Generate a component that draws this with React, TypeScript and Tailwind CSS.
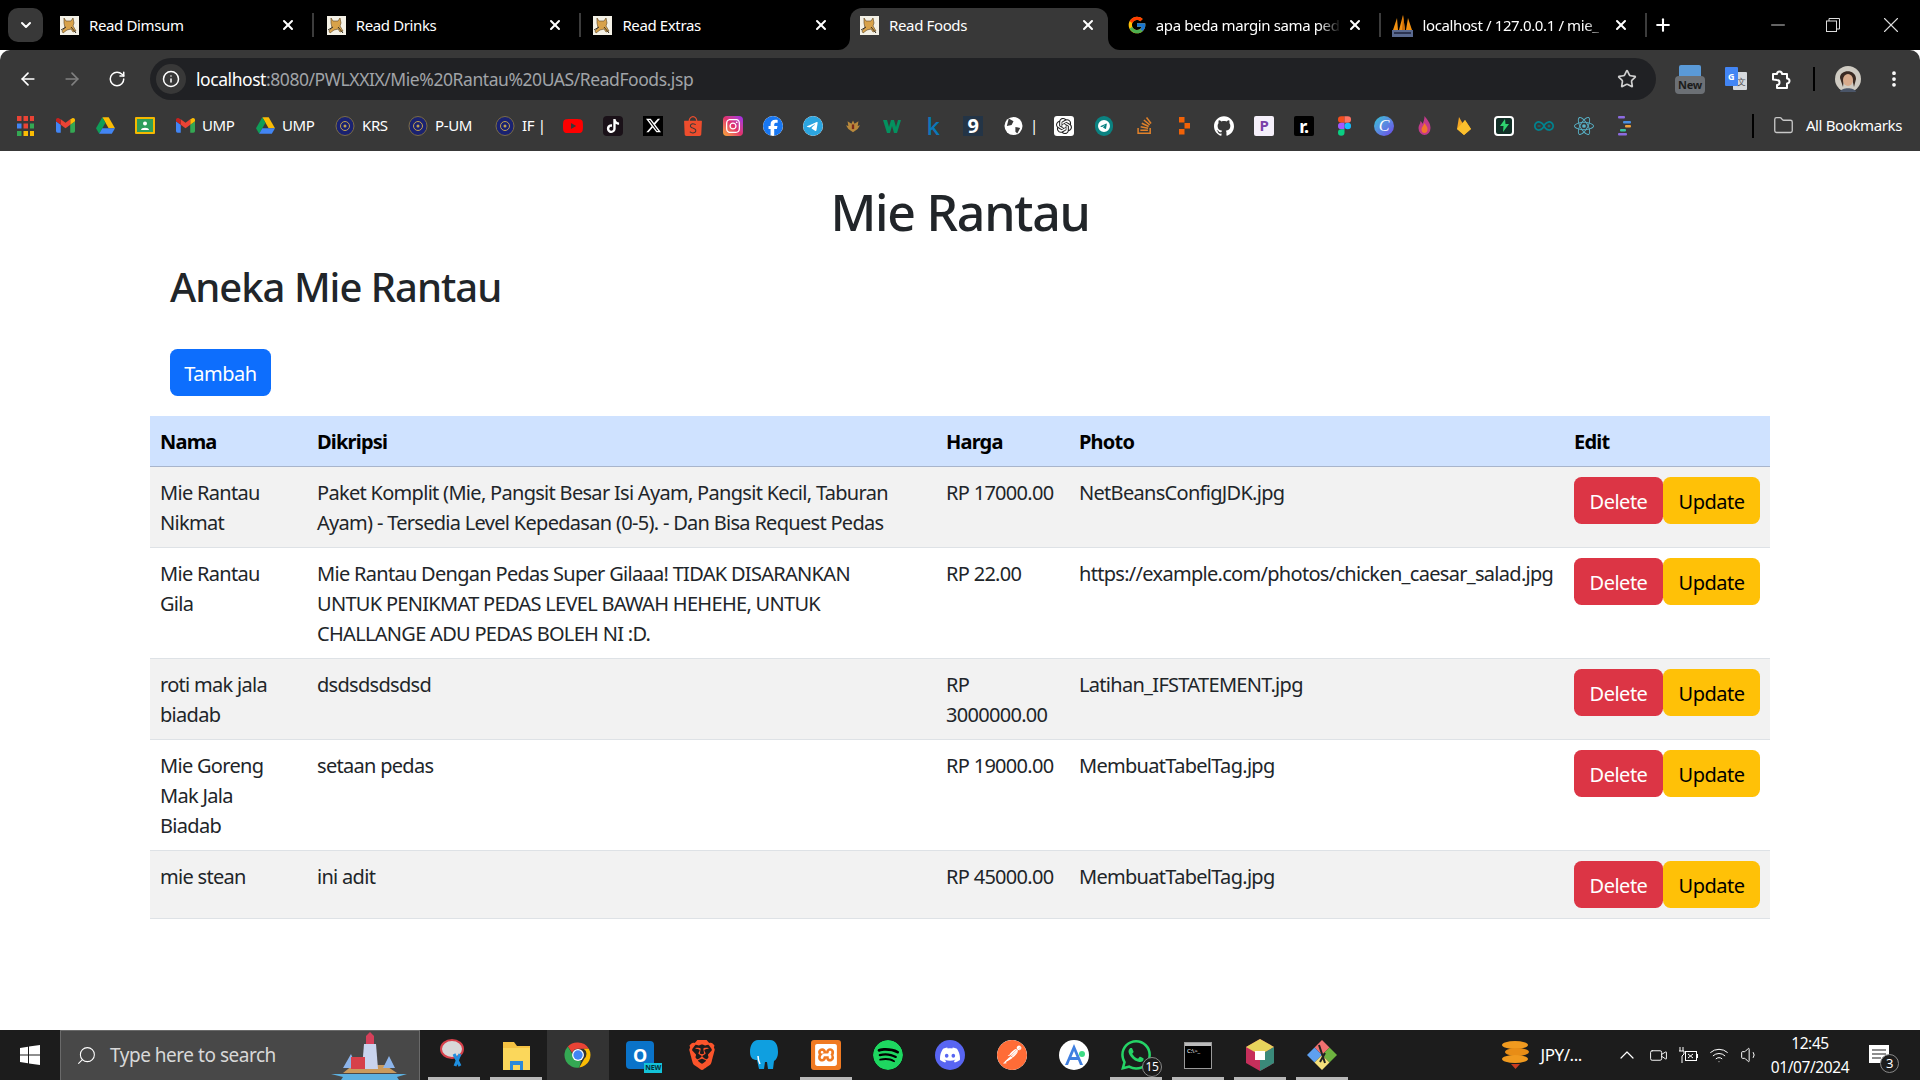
import React from "react";
import { SiYoutube, SiTiktok, SiX, SiShopee, SiInstagram, SiFacebook, SiTelegram, SiOpenai, SiStackoverflow, SiGithub, SiArduino, SiReact, SiSpotify, SiDiscord, SiPostman, SiBrave, SiXampp, SiWhatsapp } from "react-icons/si";
import { FcGoogle } from "react-icons/fc";
import { ChevronDown, X, Plus, ArrowLeft, ArrowRight, RotateCw, Info, Star, EllipsisVertical, Folder, Minus, Search, ChevronUp, Wifi, Volume1, Video } from "lucide-react";

const Tomcat = () => (
  <svg width="19" height="19" viewBox="0 0 19 19" className="shrink-0">
    <rect width="19" height="19" fill="#f4f1e6" />
    <path d="M4 2l2 3 5 0 2-3 1 5-1 3 3 5-3 1-2-3-4 1-4 3-1-2 3-3-1-5z" fill="#d8a24a" stroke="#5a4526" strokeWidth=".6" />
    <path d="M1 14l5-3M11 11l5 6" stroke="#3a3222" strokeWidth="1" />
  </svg>
);
const Pma = () => (
  <svg width="21" height="24" viewBox="0 0 21 24" className="-ml-[1px] -mr-[1px] shrink-0">
    <path d="M1 17L5 5l1 12zM7 17l4-15 2 15zM14 17l2-12 4 12z" fill="#f29111" />
    <path d="M6 17l-1-12 1 12zM13 17L11 2l-1 15z" fill="#c96a06" />
    <rect x="0" y="17" width="21" height="7" fill="#5a6a90" />
    <rect x="2" y="19" width="17" height="2" fill="#2b3350" />
  </svg>
);
const Gmail = () => (
  <svg width="19" height="15" viewBox="0 0 24 18">
    <path d="M2 18h4V8L0 3.500V16a2 2 0 0 0 2 2z" fill="#4285f4" />
    <path d="M18 18h4a2 2 0 0 0 2-2V3.500L18 8z" fill="#34a853" />
    <path d="M18 1v7l6-4.500V2c0-2-2.300-3-3.800-1.800z" fill="#fbbc04" />
    <path d="M6 8V1l6 4.500L18 1v7l-6 4.500z" fill="#ea4335" />
    <path d="M0 2v1.500L6 8V1L3.800.200C2.300-1 0 0 0 2z" fill="#c5221f" />
  </svg>
);
const Drive = () => (
  <svg width="19" height="17" viewBox="0 0 24 21">
    <path d="M8 0h8l8 14h-8z" fill="#fbbc04" />
    <path d="M8 0L0 14l4 7 8-14z" fill="#0f9d58" />
    <path d="M4 21h16l4-7H8z" fill="#4285f4" />
  </svg>
);
const Classroom = () => (
  <svg width="20" height="17" viewBox="0 0 20 17">
    <rect width="20" height="17" rx="1" fill="#f5b800" />
    <rect x="2" y="2" width="16" height="13" fill="#2e9e5b" />
    <circle cx="10" cy="6.500" r="2" fill="#fff" />
    <path d="M6 13c0-3 8-3 8 0z" fill="#fff" />
  </svg>
);
const Ump = () => (
  <svg width="20" height="20" viewBox="0 0 20 20">
    <ellipse cx="10" cy="10" rx="9" ry="9.500" fill="#1a2270" stroke="#7b6c45" />
    <circle cx="10" cy="10" r="4.500" fill="none" stroke="#c0a052" strokeWidth="1" />
    <circle cx="10" cy="10" r="1.500" fill="#c0a052" />
  </svg>
);
const Apps = () => (
  <svg width="17" height="20" viewBox="0 0 17 20">
    {[["#ea4335", "#ea4335", "#ea4335"], ["#4285f4", "#ea4335", "#34a853"], ["#34a853", "#fbbc04", "#fbbc04"]].flatMap((r, j) =>
      r.map((c, i) => <rect key={`${i}${j}`} x={i * 6.500} y={j * 7.500} width="4.500" height="5" fill={c} />)
    )}
  </svg>
);
const Figma = () => (
  <svg width="13" height="20" viewBox="0 0 12 18">
    <path d="M3 0h3v6H3a3 3 0 0 1 0-6z" fill="#f24e1e" />
    <path d="M6 0h3a3 3 0 0 1 0 6H6z" fill="#ff7262" />
    <path d="M3 6h3v6H3a3 3 0 0 1 0-6z" fill="#a259ff" />
    <circle cx="9" cy="9" r="3" fill="#1abcfe" />
    <path d="M3 12h3v3a3 3 0 1 1-3-3z" fill="#0acf83" />
  </svg>
);
const Chrome = () => (
  <svg width="30" height="30" viewBox="0 0 48 48">
    <path d="M24 4a20 20 0 0 1 17.300 10H24a10 10 0 0 0-9.400 6.500L7.800 10.500A20 20 0 0 1 24 4z" fill="#ea4335" />
    <path d="M41.300 14A20 20 0 0 1 26 43.900l8-13.900A10 10 0 0 0 33 14z" fill="#fbbc04" />
    <path d="M26 43.900A20 20 0 0 1 7.800 10.500L16 24.500A10 10 0 0 0 29 32.600z" fill="#34a853" />
    <circle cx="24" cy="24" r="9.500" fill="#fff" />
    <circle cx="24" cy="24" r="7.500" fill="#4285f4" />
  </svg>
);
const Flare = ({ side }: { side: "l" | "r" }) => (
  <svg width="12" height="12" viewBox="0 0 12 12" className={`absolute bottom-0 ${side === "l" ? "-left-[12px]" : "-right-[12px]"}`}>
    <path d={side === "l" ? "M12 0v12H0A12 12 0 0 0 12 0z" : "M0 0v12h12A12 12 0 0 1 0 0z"} fill="#383838" />
  </svg>
);
const Bm = ({ w = 40, icon, label }: { w?: number; icon: React.ReactNode; label?: string }) => (
  <div className="flex h-full shrink-0 items-center" style={{ width: w }}>
    <div className="flex w-10 shrink-0 items-center justify-center">{icon}</div>
    {label && <span className="-ml-[3px] whitespace-nowrap text-[15px] text-white">{label}</span>}
  </div>
);
const TabItem = ({ title, icon, active, sep = true, fade }: { title: string; icon: React.ReactNode; active?: boolean; sep?: boolean; fade?: boolean }) => (
  <div className="flex h-full w-[266.700px] shrink-0 items-end">
    <div className={`relative flex h-[42px] w-[258px] items-center pb-[8px] pl-[10px] ${active ? "rounded-t-[12px] bg-[#383838]" : ""}`}>
      {active && <Flare side="l" />}
      {active && <Flare side="r" />}
      {icon}
      <span className={`ml-[10px] w-[185px] overflow-hidden whitespace-nowrap text-[15px] text-white ${fade ? "[mask-image:linear-gradient(to_right,black_88%,transparent)]" : ""}`}>{title}</span>
      <X size={16} strokeWidth={3} className="ml-[6px] shrink-0 text-white" />
    </div>
    {sep && <div className="mb-[13px] ml-[4px] h-[24px] w-[2px] shrink-0 bg-[#3c3c3c]" />}
  </div>
);
const TaskIcon = ({ children, open, active }: { children: React.ReactNode; open?: boolean; active?: boolean }) => (
  <div className={`relative flex h-full w-[62px] shrink-0 items-center justify-center ${active ? "bg-[#333333]" : ""}`}>
    {children}
    {open && <div className="absolute bottom-0 left-[5px] h-[3px] w-[52px] bg-[#b8b8b8]" />}
  </div>
);
const rows: { n: string; d: React.ReactNode; h: string; p: string }[] = [
  { n: "Mie Rantau Nikmat", d: "Paket Komplit (Mie, Pangsit Besar Isi Ayam, Pangsit Kecil, Taburan Ayam) - Tersedia Level Kepedasan (0-5). - Dan Bisa Request Pedas", h: "RP 17000.00", p: "NetBeansConfigJDK.jpg" },
  { n: "Mie Rantau Gila", d: <>Mie Rantau Dengan Pedas Super Gilaaa! TIDAK DISARANKAN<br />UNTUK PENIKMAT PEDAS LEVEL BAWAH HEHEHE, UNTUK<br />CHALLANGE ADU PEDAS BOLEH NI :D.</>, h: "RP 22.00", p: "https://example.com/photos/chicken_caesar_salad.jpg" },
  { n: "roti mak jala biadab", d: "dsdsdsdsdsd", h: "RP 3000000.00", p: "Latihan_IFSTATEMENT.jpg" },
  { n: "Mie Goreng Mak Jala Biadab", d: "setaan pedas", h: "RP 19000.00", p: "MembuatTabelTag.jpg" },
  { n: "mie stean", d: "ini adit", h: "RP 45000.00", p: "MembuatTabelTag.jpg" },
];
const th = "border-b border-[#a8b5cc] bg-[#cfe2ff] pb-[9px] pl-[10px] pr-[10px] pt-[11px] text-left align-top font-bold text-black";

export default function App() {
  return (
    <div className="flex h-screen w-[1920px] flex-col overflow-hidden bg-white font-['Noto_Sans',sans-serif] [&_*]:tracking-[-0.025em]">
      <div className="flex h-[50px] shrink-0 items-end bg-black">
        <div className="flex w-[50px] shrink-0 items-start self-start pl-[8px] pt-[8px]">
          <div className="flex h-[34px] w-[35px] items-center justify-center rounded-[10px] bg-[#383838]"><ChevronDown size={16} strokeWidth={3} className="text-white" /></div>
        </div>
        <TabItem title="Read Dimsum" icon={<Tomcat />} />
        <TabItem title="Read Drinks" icon={<Tomcat />} />
        <TabItem title="Read Extras" icon={<Tomcat />} sep={false} />
        <TabItem title="Read Foods" icon={<Tomcat />} active sep={false} />
        <TabItem title="apa beda margin sama ped" fade icon={<FcGoogle size={20} className="-mr-[1px] shrink-0" />} />
        <TabItem title="localhost / 127.0.0.1 / mie_" fade icon={<Pma />} />
        <div className="flex h-full items-center pl-[3px]"><Plus size={20} strokeWidth={2.500} className="text-white" /></div>
        <div className="flex-1" />
        <div className="flex h-full items-center pr-[16px] text-[#dcdcdc]">
          <Minus size={22} strokeWidth={1} />
          <svg width="14" height="14" viewBox="0 0 14 14" fill="none" stroke="#dcdcdc" className="ml-[37px]"><rect x=".5" y="3" width="10" height="10.500" /><path d="M3 3V.5h10.500V11H10.500" /></svg>
          <X size={26} strokeWidth={1} className="ml-[38px]" />
        </div>
      </div>
      <div className="flex h-[50px] shrink-0 items-end rounded-t-[10px] bg-[#383838]">
        <div className="flex h-[42px] w-[150px] items-center pl-[18px] text-white">
          <ArrowLeft size={20} strokeWidth={2} />
          <ArrowRight size={20} strokeWidth={2} className="ml-[24px] text-[#808080]" />
          <RotateCw size={18} strokeWidth={2} className="ml-[26px]" />
        </div>
        <div className="flex h-[42px] w-[1506px] items-center rounded-full bg-[#202124] pl-[6px] pr-[19px]">
          <div className="flex h-[30px] w-[30px] items-center justify-center rounded-full bg-[#383838]"><Info size={18} className="text-white" /></div>
          <div className="ml-[10px] flex-1 whitespace-nowrap text-[17.500px] text-[#a0a4a8]"><span className="text-white">localhost</span>:8080/PWLXXIX/Mie%20Rantau%20UAS/ReadFoods.jsp</div>
          <Star size={20} strokeWidth={2} className="text-[#d0d0d0]" />
        </div>
        <div className="flex h-[42px] flex-1 items-center pl-[16px] text-white">
          <div className="flex w-[36px] flex-col items-center">
            <div className="h-[12px] w-[22px] rounded-t-[2px] bg-[#5a9ad8]" />
            <div className="-mt-[1px] flex h-[18px] w-[30px] items-center justify-center rounded-[4px] bg-[#6c7075] text-[11px] font-bold leading-none text-[#1c1c1c]">New</div>
          </div>
          <svg width="22" height="24" viewBox="0 0 22 24" className="ml-[17px]"><rect x="8" y="5" width="14" height="18" rx="1" fill="#d5d8dc" /><text x="12" y="18" fontSize="9" fill="#555">文</text><rect width="13" height="19" rx="1" fill="#4285f4" /><text x="3" y="13" fontSize="9" fontWeight="700" fill="#fff">G</text></svg>
          <svg width="22" height="22" viewBox="0 0 22 22" fill="none" stroke="#fff" strokeWidth="2" strokeLinejoin="round" className="ml-[23px]"><path d="M3 6h4a2.500 2.500 0 0 1 5 0h5v4.500a2.500 2.500 0 0 1 0 5V20H7v-3a2.500 2.500 0 0 0 0-5l-4-.5z" /></svg>
          <div className="ml-[21px] h-[24px] w-[2px] bg-black" />
          <svg width="26" height="26" viewBox="0 0 26 26" className="ml-[20px]"><circle cx="13" cy="13" r="13" fill="#cfcbc2" /><path d="M5 12C5 3 21 3 21 13l-2 8-2-9-8-1-1 10z" fill="#3a2a22" /><ellipse cx="13" cy="14" rx="5" ry="6" fill="#d8ab8c" /><path d="M5 26c1-5 15-5 16 0z" fill="#4a5568" /></svg>
          <EllipsisVertical size={20} strokeWidth={2.500} className="ml-[23px]" />
        </div>
      </div>
      <div className="flex h-[51px] shrink-0 items-center bg-[#383838] pl-[5px]">
        <Bm icon={<Apps />} />
        <Bm icon={<Gmail />} />
        <Bm icon={<Drive />} />
        <Bm icon={<Classroom />} />
        <Bm w={80} icon={<Gmail />} label="UMP" />
        <Bm w={80} icon={<Drive />} label="UMP" />
        <Bm w={73} icon={<Ump />} label="KRS" />
        <Bm w={87} icon={<Ump />} label="P-UM" />
        <Bm w={68} icon={<Ump />} label="IF |" />
        <Bm icon={<SiYoutube size={20} className="text-[#ff0000]" />} />
        <Bm icon={<div className="flex h-[20px] w-[20px] items-center justify-center rounded-[4px] bg-[#1a1118]"><SiTiktok size={14} className="text-white" /></div>} />
        <Bm icon={<div className="flex h-[20px] w-[20px] items-center justify-center bg-black"><SiX size={15} className="text-white" /></div>} />
        <Bm icon={<SiShopee size={20} className="text-[#ee4d2d]" />} />
        <Bm icon={<div className="flex h-[20px] w-[20px] items-center justify-center rounded-[4px] bg-gradient-to-tr from-[#f9a825] via-[#e1306c] to-[#a020f0]"><SiInstagram size={14} className="text-white" /></div>} />
        <Bm icon={<SiFacebook size={20} className="rounded-full bg-white text-[#1877f2]" />} />
        <Bm icon={<SiTelegram size={20} className="rounded-full bg-white text-[#2ca5e0]" />} />
        <Bm icon={<svg width="14" height="18" viewBox="0 0 18 20"><path d="M9 3l2 4 5-3-1 6 3-1-3 5-6 4-6-4-3-5 3 1-1-6 5 3z" fill="#b8893c" /><path d="M9 8v6" stroke="#7a2a1a" strokeWidth="3" /></svg>} />
        <Bm icon={<svg width="20" height="16" viewBox="0 0 20 16"><path d="M0 2h4l2 7 2-7h3l2 7 2-7h3l-4 13h-3L9 8l-2 7H4z" fill="#04915f" /></svg>} />
        <Bm icon={<span className="text-[24px] font-medium leading-none text-[#0a79b8]">k</span>} />
        <Bm icon={<div className="flex h-[20px] w-[20px] items-center justify-center bg-[#233446] text-[20px] font-bold leading-none text-white">9</div>} />
        <Bm w={51} icon={<svg width="19" height="20" viewBox="0 0 20 20"><circle cx="10" cy="10" r="9.500" fill="#fff" /><path d="M5 2l5 3-2 4-5 1zM12 11l5 1-3 6-2-2z" fill="#383838" /></svg>} label="|" />
        <Bm icon={<div className="flex h-[20px] w-[20px] items-center justify-center rounded-[3px] bg-white"><SiOpenai size={16} className="text-[#222]" /></div>} />
        <Bm icon={<div className="flex h-[20px] w-[18px] items-center justify-center rounded-full bg-[#0b8281]"><SiTelegram size={12} className="text-white" /></div>} />
        <Bm icon={<SiStackoverflow size={17} className="text-[#e0812a]" />} />
        <Bm icon={<svg width="13" height="18" viewBox="0 0 13 18" fill="#f26207"><rect x="1" width="5.500" height="5.500" /><rect x="6.500" y="6" width="5.500" height="5.500" /><rect x="1" y="12" width="5.500" height="5.500" /></svg>} />
        <Bm icon={<SiGithub size={20} className="text-white" />} />
        <Bm icon={<div className="flex h-[20px] w-[20px] items-center justify-center rounded-[2px] bg-[#f5f0fa] text-[15px] font-bold text-[#7b3fa8]">P</div>} />
        <Bm icon={<div className="flex h-[20px] w-[20px] items-end justify-center rounded-[2px] bg-black pb-[2px] text-[18px] font-bold leading-[15px] text-white">r.</div>} />
        <Bm icon={<Figma />} />
        <Bm icon={<div className="flex h-[20px] w-[20px] items-center justify-center rounded-full bg-gradient-to-br from-[#22c4d4] to-[#6a3de8] font-['Liberation_Serif',serif] text-[16px] italic leading-none text-white">C</div>} />
        <Bm icon={<svg width="13" height="20" viewBox="0 0 13 20"><path d="M6.500 0c3 4 6 7 6 12a6 7 0 0 1-12 0c0-3 2-4 2-7 1 1 2 2 2 3 1-2 2-5 2-8z" fill="#c23a8a" /><path d="M6.500 7c2 3 3 4 3 6a3 4 0 0 1-6 0c0-2 2-3 3-6z" fill="#f2762e" /></svg>} />
        <Bm icon={<svg width="16" height="20" viewBox="0 0 16 20"><path d="M1 13L3 1l4 7 2-4 6 9-7 6z" fill="#f5a623" /><path d="M1 13l7 6 7-6-6-9z" fill="#fbc02d" /></svg>} />
        <Bm icon={<div className="flex h-[20px] w-[20px] items-center justify-center rounded-[4px] border-[2px] border-white bg-[#123028]"><svg width="9" height="13" viewBox="0 0 9 13" fill="#2fd46f"><path d="M5 0L0 7h3.500L3 13l6-8H5.500z" /></svg></div>} />
        <Bm icon={<SiArduino size={20} className="text-[#00838f]" />} />
        <Bm icon={<SiReact size={20} className="text-[#58b3c9]" />} />
        <Bm icon={<svg width="15" height="20" viewBox="0 0 15 20"><rect x="1" width="7" height="2.500" rx="1" fill="#8c6be0" /><rect x="6" y="5" width="8" height="2.500" rx="1" fill="#4a90e2" /><rect x="8" y="9" width="6" height="2.500" rx="1" fill="#f2a33a" /><rect x="3" y="13" width="6" height="2.500" rx="1" fill="#3ac5a0" /><rect x="1" y="17" width="9" height="2.500" rx="1" fill="#8c6be0" /></svg>} />
        <div className="flex-1" />
        <div className="mr-[19px] h-[24px] w-[2px] bg-black" />
        <Folder size={21} strokeWidth={1.500} className="text-[#c8c8c8]" />
        <span className="ml-[12px] mr-[18px] whitespace-nowrap text-[15px] text-white">All Bookmarks</span>
      </div>
      <main className="flex-1 bg-white pt-[31px] text-[#212529]">
        <h1 className="text-center text-[50px] font-medium leading-[60px]">Mie Rantau</h1>
        <div className="px-[150px]">
          <h2 className="ml-[20px] mt-[21px] text-[40px] font-medium leading-[48px]">Aneka Mie Rantau</h2>
          <button className="ml-[20px] mt-[38px] block h-[47px] w-[101px] rounded-[7.500px] bg-[#0d6efd] pt-[2px] text-[20px] text-white">Tambah</button>
          <table className="mt-[20px] w-[1620px] table-fixed border-collapse text-[20px] leading-[30px] [&_td]:tracking-[-0.035em] [&_th]:tracking-[-0.04em]">
            <colgroup>
              <col className="w-[157px]" /><col className="w-[629px]" /><col className="w-[133px]" /><col className="w-[495px]" /><col className="w-[206px]" />
            </colgroup>
            <thead>
              <tr>
                <th className={th}>Nama</th><th className={th}>Dikripsi</th><th className={th}>Harga</th><th className={th}>Photo</th><th className={th}>Edit</th>
              </tr>
            </thead>
            <tbody>
              {rows.map((r, i) => {
                const td = `border-b border-[#dee2e6] px-[10px] pb-[9px] pt-[11px] align-top ${i % 2 === 0 ? "bg-[#f2f2f2]" : "bg-white"}`;
                const tdBtn = `border-b border-[#dee2e6] p-[10px] align-top ${i % 2 === 0 ? "bg-[#f2f2f2]" : "bg-white"}`;
                return (
                  <tr key={i}>
                    <td className={td}>{r.n}</td>
                    <td className={td}>{r.d}</td>
                    <td className={td}>{r.h}</td>
                    <td className={td}>{r.p}</td>
                    <td className={tdBtn}>
                      <div className="flex">
                        <button className="h-[47px] w-[89px] rounded-[7.500px] bg-[#dc3545] pt-[2px] text-[20px] text-white">Delete</button>
                        <button className="h-[47px] w-[97px] rounded-[7.500px] bg-[#ffc107] pt-[2px] text-[20px] text-black">Update</button>
                      </div>
                    </td>
                  </tr>
                );
              })}
            </tbody>
          </table>
        </div>
      </main>
      <div className="flex h-[50px] shrink-0 items-center bg-[#1c1c1c]">
        <div className="flex w-[60px] justify-center">
          <svg width="20" height="20" viewBox="0 0 20 20" fill="#fff"><path d="M0 3l8-1.200V9.500H0zM9 1.600L20 0v9.500H9zM0 10.500h8v7.700L0 17zM9 10.500h11V20L9 18.400z" /></svg>
        </div>
        <div className="flex h-full w-[360px] items-center border border-b-0 border-[#6a6a6a] bg-[#484848] pl-[15px] pr-[12px]">
          <Search size={21} strokeWidth={1.200} className="-scale-x-100 text-white" />
          <span className="ml-[13px] text-[19px] text-[#d8d8d8]">Type here to search</span>
          <div className="flex-1" />
          <svg width="76" height="48" viewBox="0 0 76 48" className="self-end">
            <path d="M0 42h76l-10 3 2 3H10l2-3z" fill="#5cb0e0" />
            <path d="M12 41l10-8h32l12 8z" fill="#c99a5c" />
            <path d="M12 36l8-14 6 14zM52 36l6-12 6 12z" fill="#8db4ea" />
            <path d="M33 12h12l2 25H31z" fill="#c9d4ee" />
            <rect x="35" y="4" width="8" height="8" fill="#d6405a" />
            <path d="M39 0l4 4h-8z" fill="#d6405a" />
            <rect x="20" y="25" width="14" height="12" fill="#d6404a" />
          </svg>
        </div>
        <div className="w-[3px]" />
        <TaskIcon open><svg width="28" height="34" viewBox="0 0 28 34"><ellipse cx="12" cy="11" rx="11" ry="9" fill="#d8d8d8" stroke="#d6404a" strokeWidth="2" /><path d="M14 16l6 12M20 16l-5 12" stroke="#1f8fe0" strokeWidth="3" /></svg></TaskIcon>
        <TaskIcon open><svg width="27" height="30" viewBox="0 0 27 30"><path d="M0 2h11l3 4h13v24H0z" fill="#f5c242" /><path d="M0 8h27v22H0z" fill="#fbd75b" /><path d="M7 30v-9h13v9h-3v-5h-7v5z" fill="#2c89d9" /></svg></TaskIcon>
        <TaskIcon active><Chrome /></TaskIcon>
        <TaskIcon><div className="relative"><div className="flex h-[28px] w-[28px] items-center justify-center rounded-[4px] bg-[#0a73c9] text-[18px] font-bold text-white">O</div><div className="absolute -bottom-[4px] -right-[8px] bg-[#13c3d8] px-[1px] text-[7px] font-bold leading-[10px] text-[#04303a]">NEW</div></div></TaskIcon>
        <TaskIcon><SiBrave size={30} className="text-[#fb542b]" /></TaskIcon>
        <TaskIcon><svg width="28" height="30" viewBox="0 0 28 30"><path d="M8 0h12c6 0 8 6 8 12 0 5-2 8-4 9l-1 8h-5l-1-7h-2l-1 7H9l-2-9c-3 0-7-1-7-8C0 5 3 0 8 0z" fill="#0f9fe0" /><path d="M8 16c0 4 1 6 2 8" stroke="#fff" strokeWidth="1.500" fill="none" /></svg></TaskIcon>
        <TaskIcon open><div className="flex h-[30px] w-[30px] items-center justify-center rounded-[3px] bg-[#f07a22]"><SiXampp size={22} className="text-white" /></div></TaskIcon>
        <TaskIcon><SiSpotify size={30} className="rounded-full bg-black text-[#1ed760]" /></TaskIcon>
        <TaskIcon><div className="flex h-[30px] w-[30px] items-center justify-center rounded-full bg-[#5865f2]"><SiDiscord size={20} className="text-white" /></div></TaskIcon>
        <TaskIcon><SiPostman size={30} className="rounded-full bg-white text-[#ff6c37]" /></TaskIcon>
        <TaskIcon><svg width="30" height="30" viewBox="0 0 30 30"><circle cx="15" cy="15" r="15" fill="#fff" /><path d="M15 4l9 21h-3l-2-5h-8l-2 5H6z" fill="#3f7fe0" /><path d="M15 11l-2.500 6h5z" fill="#fff" /><circle cx="23" cy="14" r="3" fill="#3ddc84" /></svg></TaskIcon>
        <TaskIcon open><div className="relative"><SiWhatsapp size={30} className="text-[#25d366]" /><div className="absolute -bottom-[7px] -right-[11px] flex h-[20px] w-[20px] items-center justify-center rounded-full border border-[#888] bg-[#1c1c1c] text-[12px] leading-none text-white">15</div></div></TaskIcon>
        <TaskIcon open><div className="flex h-[27px] w-[28px] flex-col border border-[#999] bg-black"><div className="h-[3px] bg-[#bbb]" /><div className="ml-[2px] mt-[2px] text-[6px] leading-none text-white">C:\&gt;_</div></div></TaskIcon>
        <TaskIcon open><svg width="28" height="32" viewBox="0 0 28 32"><path d="M14 0l14 8v16l-14 8-14-8V8z" fill="#c62f5b" /><path d="M14 0l14 8-14 8L0 8z" fill="#e6d35c" /><path d="M14 16l14-8v16l-14 8z" fill="#3a8a7a" /><path d="M9 12h10v9H9z" fill="#fff" /></svg></TaskIcon>
        <TaskIcon open><svg width="30" height="30" viewBox="0 0 30 30"><path d="M15 0l7.500 7.500-7.500 7.500-7.500-7.500z" fill="#f07070" /><path d="M22.500 7.500L30 15l-7.500 7.500L15 15z" fill="#6db33f" /><path d="M7.500 7.500L15 15l-7.500 7.500L0 15z" fill="#5ea0f0" /><path d="M15 15l7.500 7.500L15 30l-7.500-7.500z" fill="#f5e07a" /><path d="M12 5l6 18M18 13l-5 9" stroke="#222" strokeWidth="2" /></svg></TaskIcon>
        <div className="flex-1" />
        <svg width="28" height="30" viewBox="0 0 28 30"><ellipse cx="14" cy="5" rx="13" ry="4" fill="#f09a1f" /><ellipse cx="16" cy="12" rx="12" ry="4" fill="#e88d16" /><ellipse cx="14" cy="19" rx="13" ry="4" fill="#f09a1f" /><path d="M10 24h9l-4.500 5z" fill="#c93c20" /></svg>
        <span className="ml-[11px] text-[17px] text-white">JPY/...</span>
        <ChevronUp size={24} strokeWidth={1.200} className="ml-[33px] text-white" />
        <Video size={19} strokeWidth={1.200} className="ml-[10px] text-white" />
        <svg width="20" height="16" viewBox="0 0 20 16" fill="none" stroke="#fff" className="ml-[10px]"><path d="M2 0v4M5 0v4M1 4h5v3l-2 2v7" /><rect x="7.500" y="4.500" width="11" height="9" /><path d="M10 7l5 4M15 7l-5 4M19.500 7v4" /></svg>
        <Wifi size={20} strokeWidth={1.200} className="ml-[11px] text-white" />
        <Volume1 size={20} strokeWidth={1.200} className="ml-[11px] text-white" />
        <div className="ml-[8px] flex w-[84px] flex-col items-center text-[15.500px] leading-[24px] text-white"><span>12:45</span><span>01/07/2024</span></div>
        <div className="relative ml-[17px] mr-[31px]">
          <svg width="20" height="20" viewBox="0 0 20 20"><rect width="20" height="18" fill="#fff" /><path d="M3 5h14M3 9h14M3 13h9" stroke="#1c1c1c" strokeWidth="1.200" /></svg>
          <div className="absolute -bottom-[8px] -right-[10px] flex h-[19px] w-[19px] items-center justify-center rounded-full border border-[#888] bg-[#1c1c1c] text-[13px] leading-none text-white">3</div>
        </div>
      </div>
    </div>
  );
}
